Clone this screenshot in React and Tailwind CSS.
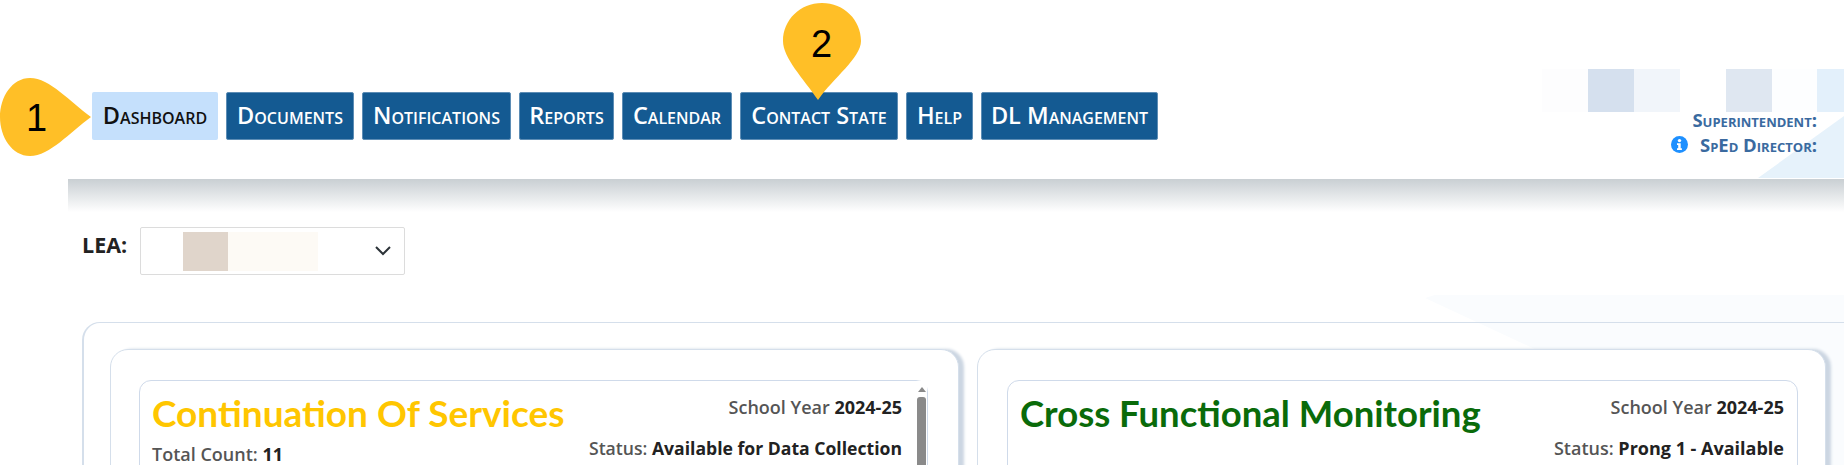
import React from 'react'

const navItems = ['Documents', 'Notifications', 'Reports', 'Calendar', 'Contact State', 'Help', 'DL Management']

const navWidths = {
  Documents: 'w-[128px]',
  Notifications: 'w-[149px]',
  Reports: 'w-[95px]',
  Calendar: 'w-[110px]',
  'Contact State': 'w-[158px]',
  Help: 'w-[67px]',
  'DL Management': 'w-[177px]',
}

const NavButton = ({ label, width }) => (
  <a className={`flex h-[48px] items-center justify-center whitespace-nowrap rounded-[2px] border border-[#5d8db5] bg-[#145a92] text-[23.5px] font-semibold text-white [font-variant:small-caps] ${width}`}>
    {label}
  </a>
)

const MarkerOne = () => (
  <svg className="absolute left-0 top-[77px]" width="92" height="80" viewBox="0 0 92 80">
    <path d="M30 1C12 1 0 20 0 40s12 39 30 39C50 79 70 55 91 40 70 25 50 1 30 1z" fill="#ffbf27" />
  </svg>
)

const MarkerTwo = () => (
  <svg className="absolute left-[783px] top-[3px]" width="80" height="99" viewBox="0 0 80 99">
    <path d="M39 0C17 0 0 17 0 38c0 17 20 37 35 59C50 75 78 55 78 38 78 17 61 0 39 0z" fill="#ffbf27" />
  </svg>
)

const Panel = ({ title, titleClass, status, statusClass, count, scrollbar, cardClass, textClass }) => (
  <div className="h-[200px] flex-1 rounded-tl-[18px] rounded-tr-[18px] border border-[#d5dfeb] bg-white pt-[30px] shadow-[5px_0_3px_#ccd6e2]">
    <div className={`relative h-[150px] rounded-t-[12px] border border-[#cfdaea] bg-white ${cardClass}`}>
      <div className={`flex items-start justify-between pl-[12px] ${textClass}`}>
        <div>
          <h2 className={`mt-[7px] font-['Lato',sans-serif] font-bold leading-[50px] ${titleClass}`}>{title}</h2>
          {count && (
            <p className="mt-[5px] text-[18px] font-semibold leading-[22px] text-[#555]">
              Total Count: <span className="font-bold text-[#222]">{count}</span>
            </p>
          )}
        </div>
        <div className="pt-[15px] text-right text-[18px] font-semibold leading-[22px] text-[#555]">
          <p>
            School Year <span className="font-bold text-[#222]">2024-25</span>
          </p>
          <p className={`mt-[19px] ${statusClass}`}>
            Status: <span className="font-bold text-[#222]">{status}</span>
          </p>
        </div>
      </div>
      {scrollbar && (
        <div className="absolute bottom-0 right-0 top-0 flex w-[11px] flex-col items-center bg-white pt-[6px]">
          <div className="h-0 w-0 border-x-[4px] border-b-[5px] border-x-transparent border-b-[#8a8a8a]" />
          <div className="mt-[5px] w-[9px] flex-1 rounded-t-[3px] bg-[#8a8a8a]" />
        </div>
      )}
    </div>
  </div>
)

export default function App() {
  return (
    <div className="relative h-[465px] overflow-hidden bg-white font-['Open_Sans',sans-serif]">
      {/* faint corner shapes behind the page */}
      <svg className="absolute right-0 top-[112px] h-[66px] w-[86px]" viewBox="0 0 86 66">
        <path d="M0 66L86 4V66z" fill="#e6f2fb" />
      </svg>
      <svg className="absolute right-0 top-[295px] h-[170px] w-[419px]" viewBox="0 0 419 170">
        <path d="M0 3L10 0H419V170H300L112 55z" fill="#fafcfe" />
      </svg>

      <header className="relative flex h-[179px] items-start pl-[92px] pt-[69px]">
        <nav className="mt-[23px] flex gap-[8px]">
          <a className="flex h-[48px] w-[126px] items-center justify-center rounded-[2px] bg-[#c5e0fc] text-[23.5px] font-semibold text-[#111] [font-variant:small-caps]">
            Dashboard
          </a>
          {navItems.map((item) => (
            <NavButton key={item} label={item} width={navWidths[item]} />
          ))}
        </nav>
        <div className="ml-auto flex flex-col items-end">
          <div className="flex h-[43px]">
            <div className="w-[46px] bg-[#fdfdfe]" />
            <div className="w-[46px] bg-[#d5e0ee]" />
            <div className="w-[46px] bg-[#f1f5fa]" />
            <div className="w-[46px]" />
            <div className="w-[46px] bg-[#dfe7f1]" />
            <div className="w-[45px] bg-[#fdfeff]" />
            <div className="w-[27px] bg-[#e3f0fb]" />
          </div>
          <div className="pr-[27px] text-right text-[18.5px] font-bold leading-[25px] text-[#3a6a9f] [font-variant:small-caps]">
            <p className="mt-[-5px]">Superintendent:</p>
            <p className="flex items-center justify-end gap-[12px]">
              <svg width="17" height="17" viewBox="0 0 17 17">
                <circle cx="8.5" cy="8.5" r="8.5" fill="#1e90ff" />
                <circle cx="8.5" cy="4.6" r="1.7" fill="#fff" />
                <path d="M6 7.2h3.7v5h1.2v1.7H6v-1.7h1.2V8.9H6z" fill="#fff" />
              </svg>
              SpEd Director:
            </p>
          </div>
        </div>
      </header>

      <div className="relative ml-[68px] h-[33px] bg-gradient-to-b from-[#c9cfd3] to-white" />

      <main className="relative pl-[82px] pt-[15px]">
        <div className="flex items-start">
          <label className="mt-[4px] w-[58px] text-[21.5px] font-bold leading-[28px] text-[#222]">LEA:</label>
          <div className="flex h-[48px] w-[265px] items-center rounded-[2px] border border-[#dcdcdc] bg-white pl-[42px] pr-[13px]">
            <div className="h-[39px] w-[45px] bg-[#e0d5cb]" />
            <div className="h-[39px] w-[90px] bg-[#fdfaf5]" />
            <svg className="ml-auto" width="16" height="10" viewBox="0 0 16 10">
              <path d="M1 1l7 7 7-7" fill="none" stroke="#2c3338" strokeWidth="2" />
            </svg>
          </div>
        </div>

        <section className="mt-[47px] flex h-[200px] gap-[18px] rounded-tl-[18px] border-l-2 border-t border-[#d5dfeb] pl-[26px] pr-[18px] pt-[26px]">
          <Panel
            title="Continuation Of Services"
            titleClass="text-[37px] text-[#ffc600]"
            status="Available for Data Collection"
            statusClass="text-[17.6px]"
            count="11"
            scrollbar
            cardClass="ml-[28px] mr-[30px]"
            textClass="pr-[25px]"
          />
          <Panel
            title="Cross Functional Monitoring"
            titleClass="text-[36.5px] text-[#0a6b0a]"
            status="Prong 1 - Available"
            statusClass="text-[18px]"
            cardClass="ml-[29px] mr-[27px]"
            textClass="pr-[13px]"
          />
        </section>
      </main>

      <MarkerOne />
      <MarkerTwo />
      <span className="absolute left-[26px] top-[96px] font-['Liberation_Sans',sans-serif] text-[38px] leading-[44px] text-black">1</span>
      <span className="absolute left-[811px] top-[22px] font-['Liberation_Sans',sans-serif] text-[38px] leading-[44px] text-black">2</span>
    </div>
  )
}
